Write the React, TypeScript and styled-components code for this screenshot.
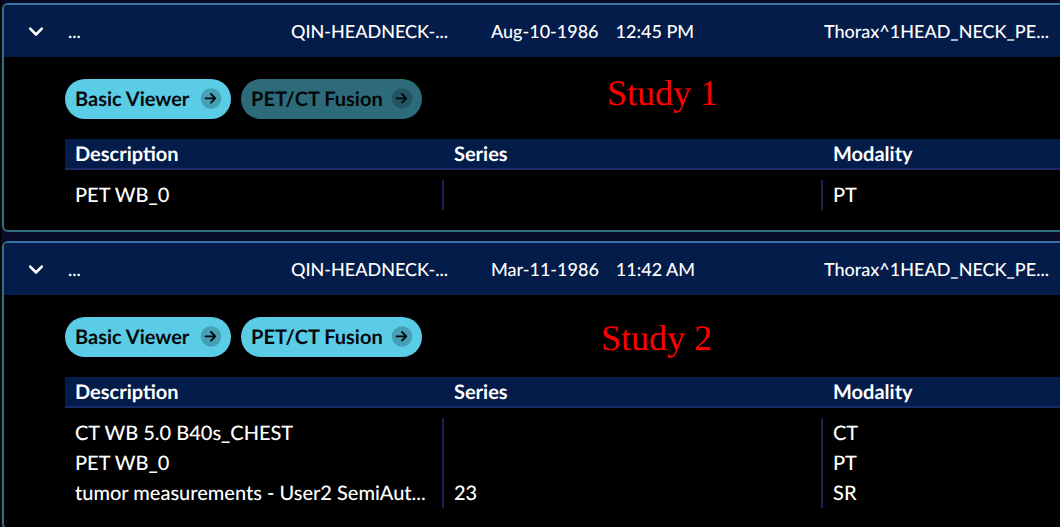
import React, { useState } from 'react';
import styled, { createGlobalStyle } from 'styled-components';

const GlobalStyle = createGlobalStyle`
  *, *::before, *::after { box-sizing: border-box; }
  html { background: #090c29; }
  body {
    margin: 0;
    overflow-x: hidden;
    font-family: Lato, "Liberation Sans", sans-serif;
    font-weight: 500;
    text-rendering: geometricPrecision;
    color: #fff;
  }
`;

const StudyList = styled.main`
  display: flex;
  flex-direction: column;
  gap: 9px;
  padding: 3px 0 8px 1px;
  border-left: 1px solid #000;
`;

const Card = styled.section`
  position: relative;
  border: 2px solid #2f6f80;
  border-top-color: #3674a8;
  border-right: 0;
  border-radius: 6px 0 0 6px;
  background: #000;
  overflow: hidden;
`;

const Summary = styled.header`
  display: grid;
  grid-template-columns: 64px 223px 200px 333px minmax(0, 1fr);
  align-items: center;
  height: 52px;
  padding-right: 16px;
  background: #041c4a;
  font-size: 18px;
  line-height: 24px;
  white-space: nowrap;
`;

const Toggle = styled.button`
  display: flex;
  justify-content: center;
  width: 64px;
  padding: 0;
  border: 0;
  background: none;
  color: #fff;
  cursor: pointer;
`;

const When = styled.span`
  display: flex;
  gap: 17px;
`;

const Details = styled.div`
  padding: 22px 0 20px 61px;
`;

const Actions = styled.div`
  display: flex;
  gap: 10px;
  margin-bottom: 20px;
`;

const ModeButton = styled.button`
  display: flex;
  align-items: center;
  justify-content: space-between;
  gap: 8px;
  min-width: 166px;
  height: 40px;
  padding: 0 9px 0 10px;
  border: 0;
  border-radius: 20px;
  background: #5acce6;
  color: #05080a;
  font: bold 20px/24px Lato, "Liberation Sans", sans-serif;
  text-rendering: inherit;
  white-space: nowrap;
  cursor: pointer;

  &:disabled {
    background: #2d6b7a;
    color: #020607;
    cursor: default;
  }
`;

const SeriesTable = styled.table`
  width: 100%;
  table-layout: fixed;
  border-spacing: 0;
  font-size: 20px;
  line-height: 24px;

  th, td {
    padding: 0 10px;
    text-align: left;
    white-space: nowrap;
    overflow: hidden;
  }
  th {
    height: 31px;
    border-bottom: 2px solid #1c2969;
    background: #041c4a;
  }
  th:last-child, td:last-child { width: 237px; }
  tbody::before {
    content: '';
    display: block;
    height: 10px;
  }
  td { height: 30px; }
  td:not(:last-child) { border-right: 2px solid #1d1f55; }
`;

const Note = styled.span<{ $left: number; $top: number }>`
  position: absolute;
  left: ${(p) => p.$left}px;
  top: ${(p) => p.$top}px;
  color: #f00;
  font: 36px/40px "Liberation Serif", serif;
`;

const Chevron = () => (
  <svg width="16" height="12" viewBox="0 0 16 12" fill="none" stroke="currentColor" strokeWidth="2.6" strokeLinecap="round" strokeLinejoin="round" aria-hidden="true">
    <path d="M2.2 3.6 8 9.5 13.8 3.6" />
  </svg>
);

const ArrowBadge = () => (
  <svg width="22" height="22" viewBox="0 0 22 22" fill="none" aria-hidden="true">
    <circle cx="11" cy="10.5" r="10.2" fill="#061018" fillOpacity="0.24" />
    <path d="M5.6 10.3h9.6M11 6l4.3 4.3L11 14.6" stroke="currentColor" strokeWidth="1.8" strokeLinecap="round" strokeLinejoin="round" />
  </svg>
);

interface Study {
  date: string;
  time: string;
  fusion: boolean;
  note: { text: string; left: number; top: number };
  series: [string, string, string][];
}

const studies: Study[] = [
  {
    date: 'Aug-10-1986',
    time: '12:45 PM',
    fusion: false,
    note: { text: 'Study 1', left: 603, top: 68 },
    series: [['PET WB_0', '', 'PT']],
  },
  {
    date: 'Mar-11-1986',
    time: '11:42 AM',
    fusion: true,
    note: { text: 'Study 2', left: 597, top: 75 },
    series: [
      ['CT WB 5.0 B40s_CHEST', '', 'CT'],
      ['PET WB_0', '', 'PT'],
      ['tumor measurements - User2 SemiAut...', '23', 'SR'],
    ],
  },
];

function StudyCard({ study }: { study: Study }) {
  const [open, setOpen] = useState(true);
  return (
    <Card>
      <Summary>
        <Toggle type="button" aria-label="Toggle study details" aria-expanded={open} onClick={() => setOpen(!open)}>
          <Chevron />
        </Toggle>
        <span>...</span>
        <span>QIN-HEADNECK-...</span>
        <When>
          <span>{study.date}</span>
          <span>{study.time}</span>
        </When>
        <span>Thorax^1HEAD_NECK_PE...</span>
      </Summary>
      {open && (
        <Details>
          <Actions>
            <ModeButton type="button">Basic Viewer <ArrowBadge /></ModeButton>
            <ModeButton type="button" disabled={!study.fusion}>PET/CT Fusion <ArrowBadge /></ModeButton>
          </Actions>
          <SeriesTable>
            <thead>
              <tr>
                <th scope="col">Description</th>
                <th scope="col">Series</th>
                <th scope="col">Modality</th>
              </tr>
            </thead>
            <tbody>
              {study.series.map(([description, series, modality]) => (
                <tr key={description}>
                  <td>{description}</td>
                  <td>{series}</td>
                  <td>{modality}</td>
                </tr>
              ))}
            </tbody>
          </SeriesTable>
          <Note $left={study.note.left} $top={study.note.top}>{study.note.text}</Note>
        </Details>
      )}
    </Card>
  );
}

export default function App() {
  return (
    <>
      <GlobalStyle />
      <StudyList>
        {studies.map((study) => (
          <StudyCard key={study.date} study={study} />
        ))}
      </StudyList>
    </>
  );
}
